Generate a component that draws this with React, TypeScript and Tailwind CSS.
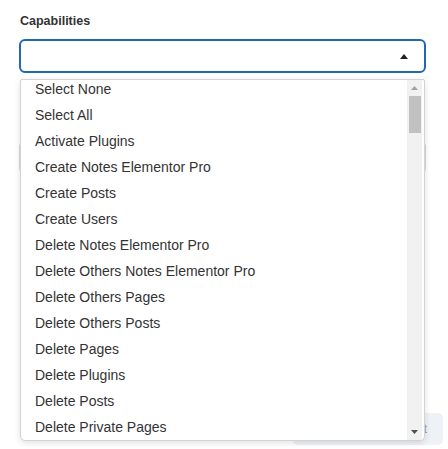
import React from "react";

const items = [
  "Select None",
  "Select All",
  "Activate Plugins",
  "Create Notes Elementor Pro",
  "Create Posts",
  "Create Users",
  "Delete Notes Elementor Pro",
  "Delete Others Notes Elementor Pro",
  "Delete Others Pages",
  "Delete Others Posts",
  "Delete Pages",
  "Delete Plugins",
  "Delete Posts",
  "Delete Private Pages",
];

export default function App() {
  return (
    <div
      className="relative w-[448px] h-[449px] overflow-hidden bg-white text-[#333]"
      style={{ fontFamily: '"Liberation Sans", Arial, sans-serif' }}
    >
      <div className="pl-[19px] pr-[22px] pt-[13px] flex flex-col">
        <div className="pl-[1px] text-[12.5px] font-bold leading-[16px] text-[#333]">Capabilities</div>
        <div className="relative mt-[10px]">
          <div className="h-[34px] w-[407px] rounded-[6px] border-2 border-[#2068b0] bg-white flex items-center justify-end pr-[16px]">
            <svg width="8" height="5" viewBox="0 0 8 5">
              <path d="M0 5 L4 0 L8 5 Z" fill="#222" />
            </svg>
          </div>

          {/* background content behind the dropdown */}
          <div className="mt-[55px] h-[14px]" />
          <div className="h-[31px] w-[407px] rounded-[4px] border border-[#d9d9d9] bg-white" />
          <div className="mt-[240px] flex justify-end">
            <div className="mr-[-17px] h-[32px] w-[150px] rounded-[5px] bg-[#eef1f6] flex items-center justify-end pr-[16px] text-[13px] text-[#9aa0a8]">
              Submit
            </div>
          </div>

          {/* dropdown menu overlay */}
          <div className="absolute left-[1px] top-[40px] w-[405px] h-[362px] rounded-b-[5px] rounded-t-[2px] border border-[#d3d3d3] bg-white shadow-[0_2px_6px_rgba(0,0,0,0.12)] overflow-hidden flex">
            <div className="flex-1 overflow-hidden">
              <div className="mt-[-4px] flex flex-col">
                {items.map((t) => (
                  <div key={t} className="h-[26px] pl-[14px] flex items-center text-[14px] leading-[16px] text-[#333] whitespace-nowrap">
                    {t}
                  </div>
                ))}
              </div>
            </div>
            <div className="w-[15px] mr-[2px] bg-[#f1f1f1] flex flex-col items-center">
              <div className="h-[16px] flex items-center justify-center">
                <svg width="7" height="4" viewBox="0 0 7 4">
                  <path d="M0 4 L3.5 0 L7 4 Z" fill="#a3a3a3" />
                </svg>
              </div>
              <div className="w-[12px] h-[37px] bg-[#c1c1c1]" />
              <div className="flex-1" />
              <div className="h-[17px] flex items-center justify-center">
                <svg width="7" height="4" viewBox="0 0 7 4">
                  <path d="M0 0 L3.5 4 L7 0 Z" fill="#505050" />
                </svg>
              </div>
            </div>
          </div>
        </div>
      </div>
    </div>
  );
}
